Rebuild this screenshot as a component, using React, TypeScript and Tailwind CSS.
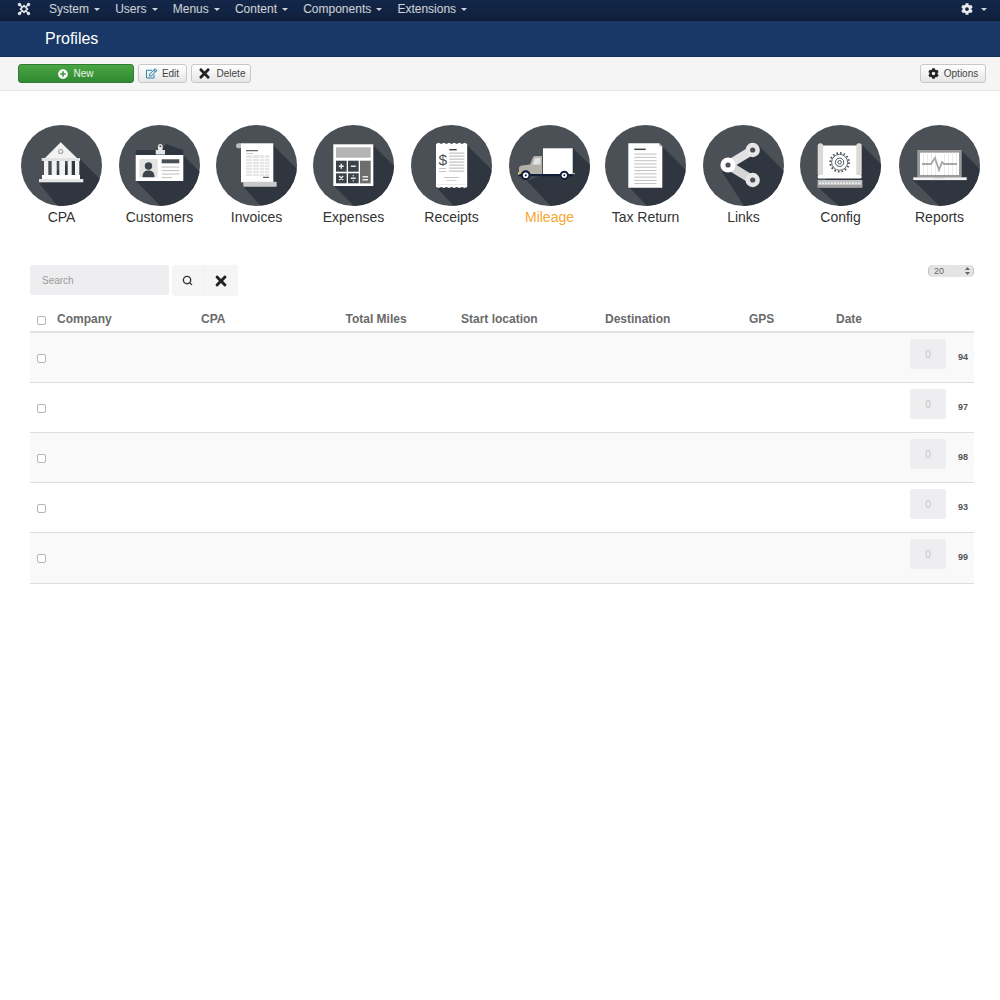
import type { ReactNode } from "react";
import { FaCog, FaPlusCircle, FaRegEdit, FaTimes } from "react-icons/fa";
import { Search } from "lucide-react";

const menu = ["System", "Users", "Menus", "Content", "Components", "Extensions"];
const columns = ["Company", "CPA", "Total Miles", "Start location", "Destination", "GPS", "Date"];
const rows = [94, 97, 98, 93, 99];

function Caret() {
  return <span className="ml-[5px] inline-block h-0 w-0 border-x-[3.5px] border-t-[3.5px] border-x-transparent border-t-white/80 align-middle" />;
}

function Joomla() {
  return (
    <svg width="14" height="14" viewBox="0 0 14 14" fill="none" stroke="#dfe3ea" strokeWidth="1.6">
      <path d="M2.5 2.5 L5 5 M11.5 2.5 L9 5 M2.5 11.5 L5 9 M11.5 11.5 L9 9 M7 3.6 L10.4 7 L7 10.4 L3.6 7 Z" />
      <circle cx="2.5" cy="2.5" r="1.7" fill="#dfe3ea" stroke="none" />
      <circle cx="11.5" cy="2.5" r="1.7" fill="#dfe3ea" stroke="none" />
      <circle cx="2.5" cy="11.5" r="1.7" fill="#dfe3ea" stroke="none" />
      <circle cx="11.5" cy="11.5" r="1.7" fill="#dfe3ea" stroke="none" />
    </svg>
  );
}

function Circle({ shadow, children }: { shadow: string; children: ReactNode }) {
  return (
    <div className="h-[81px] w-[81px] overflow-hidden rounded-full bg-[#4a5056]">
      <svg width="81" height="81" viewBox="0 0 81 81">
        <polygon points={shadow} fill="#30363f" />
        {children}
      </svg>
    </div>
  );
}

function lines(x: number, w: number, ys: number[], color = "#c9c9c9", h = 1) {
  return ys.map((y) => <rect key={`${x}-${y}`} x={x} y={y} width={w} height={h} fill={color} />);
}

const IconCpa = (
  <Circle shadow="57,32 110,85 60,110 18,58">
    <polygon points="39.7,17.3 56,33 24,33" fill="#f2f2f2" />
    <circle cx="39.7" cy="26.5" r="2.6" fill="#a5a5a5" />
    <circle cx="39.7" cy="26.5" r="1.4" fill="#f2f2f2" />
    <rect x="20.7" y="33" width="38.3" height="3" fill="#e2e2e2" />
    <rect x="23" y="36" width="4.3" height="14" fill="#f2f2f2" />
    <rect x="30.7" y="36" width="5" height="14" fill="#f2f2f2" />
    <rect x="38.3" y="36" width="5.7" height="14" fill="#f2f2f2" />
    <rect x="46.7" y="36" width="4" height="14" fill="#f2f2f2" />
    <rect x="54" y="36" width="4.3" height="14" fill="#f2f2f2" />
    <rect x="21" y="50" width="38" height="4" fill="#fff" />
    <rect x="18" y="54" width="44.3" height="3.3" fill="#e6e6e6" />
  </Circle>
);

const IconCustomers = (
  <Circle shadow="47,19 64,25 64,30 110,76 70,110 17,56">
    <rect x="16.7" y="25" width="47.6" height="5" fill="#30363f" />
    <rect x="16.7" y="30" width="47.6" height="26" fill="#fff" />
    <rect x="36.7" y="25" width="9.3" height="4.5" fill="#e4e4e4" />
    <rect x="39" y="19" width="4.6" height="7" rx="2.3" fill="#ececec" />
    <circle cx="41.3" cy="21.3" r="1" fill="#4a5056" />
    <rect x="20.3" y="34" width="18.4" height="18.3" fill="#e3e3e3" />
    <circle cx="29.5" cy="41" r="3.7" fill="#3d444b" />
    <path d="M23.5 52.3 C23.5 47 26 45.5 29.5 45.5 C33 45.5 35.5 47 35.5 52.3 Z" fill="#3d444b" />
    <rect x="42.7" y="34.3" width="17.6" height="4" fill="#4a5056" />
    {lines(42.7, 17.6, [41.5, 45, 48.5], "#c4c4c4", 1.1)}
    {lines(42.7, 10, [52], "#c4c4c4", 1.1)}
  </Circle>
);

const IconInvoices = (
  <Circle shadow="57,20 110,73 70,110 27,61">
    <rect x="20" y="18.3" width="7" height="5" rx="2.5" fill="#bdbdbd" />
    <rect x="25" y="18.3" width="32.3" height="39" fill="#fff" />
    <rect x="27.3" y="56.7" width="33.4" height="5" rx="1" fill="#c9c9c9" />
    <rect x="30" y="25.2" width="12" height="1" fill="#3d444b" />
    <rect x="30" y="28" width="7" height="0.8" fill="#bbb" />
    <rect x="30" y="30" width="23.3" height="21" fill="#e6e6e6" />
    {[33, 36, 39, 42, 45, 48].map((y) => (
      <rect key={y} x="30" y={y} width="23.3" height="0.8" fill="#fff" />
    ))}
    {[36, 43, 48].map((x) => (
      <rect key={x} x={x} y="30" width="0.8" height="21" fill="#fff" />
    ))}
    <rect x="47" y="51.8" width="6" height="1" fill="#3d444b" />
  </Circle>
);

const key = "#3c434a";
const IconExpenses = (
  <Circle shadow="60,20 110,70 70,110 21,61">
    <rect x="20.3" y="19.3" width="40" height="41.7" fill="#fff" />
    <rect x="23" y="22.3" width="34.7" height="10.4" fill="#b5b5b5" />
    <rect x="23" y="35.7" width="10.7" height="11" fill={key} />
    <rect x="35" y="35.7" width="10.7" height="11" fill={key} />
    <rect x="23" y="48.3" width="10.7" height="10" fill={key} />
    <rect x="35" y="48.3" width="10.7" height="10" fill={key} />
    <rect x="47" y="35.7" width="10.7" height="22.7" fill="#6e6e6e" />
    <path d="M25.8 41.2h5M28.3 38.7v5M37.8 41.2h5M26.2 51l4 4M30.2 51l-4 4M37.8 53.3h5M49.5 51.8h5.5M49.5 54.8h5.5" stroke="#e8e8e8" strokeWidth="1.5" />
    <circle cx="40.3" cy="50.8" r="0.8" fill="#e8e8e8" />
    <circle cx="40.3" cy="55.8" r="0.8" fill="#e8e8e8" />
  </Circle>
);

const IconReceipts = (
  <Circle shadow="56,20 110,74 70,110 25,62">
    <path d="M25 19 l2.6 -1.2 2.6 1.2 2.6 -1.2 2.6 1.2 2.6 -1.2 2.6 1.2 2.6 -1.2 2.6 1.2 2.6 -1.2 2.6 1.2 2.6 -1.2 2.6 1.2 V62 l-2.6 1 -2.6 -1 -2.6 1 -2.6 -1 -2.6 1 -2.6 -1 -2.6 1 -2.6 -1 -2.6 1 -2.6 -1 -2.6 1 -2.6 -1 Z" fill="#fff" />
    <text x="27.5" y="39.5" fontFamily="'Liberation Sans', sans-serif" fontSize="15.5" fill="#4a5056">$</text>
    <rect x="38.3" y="24" width="7.4" height="1.4" fill="#3c434a" />
    {lines(38.3, 15, [27.5, 30.5, 33.5, 36.5, 39.5, 42.5, 45.5], "#c6c6c6", 1.3)}
    {lines(28, 7, [43, 46], "#c6c6c6", 1)}
    {lines(33, 15, [52], "#c6c6c6", 1)}
    {lines(35.5, 10, [55], "#d0d0d0", 1)}
    {lines(26, 29, [59], "#dcdcdc", 0.6)}
  </Circle>
);

const IconMileage = (
  <Circle shadow="64,23 110,69 100,100 60,100 18,56 34,49">
    <rect x="34" y="23.3" width="29.7" height="25.7" fill="#fff" />
    <path d="M10 49 V43 Q10 41 13 40.5 L21 39.5 L24 32 Q24.5 31 26 31 H33 V49 Z" fill="#b3afa9" />
    <path d="M23.5 39.5 L26 33 H31.5 V39.5 Z" fill="#dfe3e6" />
    <rect x="9" y="49" width="55" height="2.2" fill="#12203b" />
    <rect x="63" y="48" width="3" height="1.2" fill="#b3afa9" />
    <rect x="9" y="47" width="1.4" height="3" fill="#e0c24a" />
    <circle cx="16.7" cy="50.3" r="5" fill="#12203b" />
    <circle cx="16.7" cy="50.3" r="2.8" fill="#fff" />
    <circle cx="16.7" cy="50.3" r="1.1" fill="#12203b" />
    <circle cx="55.3" cy="50.3" r="4.6" fill="#12203b" />
    <circle cx="55.3" cy="50.3" r="2.6" fill="#fff" />
    <circle cx="55.3" cy="50.3" r="1" fill="#12203b" />
  </Circle>
);

const IconTax = (
  <Circle shadow="56,20 110,74 70,110 24,62">
    <path d="M23.3 18.3 H54 L57.3 21.6 V62.7 H23.3 Z" fill="#fff" />
    <path d="M54 18.3 V21.6 H57.3 Z" fill="#c9c9c9" />
    <rect x="29.3" y="23.6" width="11.4" height="1.5" fill="#3c434a" />
    {lines(29.3, 22.3, [28.5, 31.8, 35.1, 38.4, 41.7, 45, 48.3, 51.6, 54.9, 58], "#c6c6c6", 1.1)}
  </Circle>
);

const IconLinks = (
  <Circle shadow="55,20 110,75 60,110 19,47">
    <path d="M25 40 L49.7 25" stroke="#e2e2e2" strokeWidth="9" />
    <path d="M25 40 L49.7 55" stroke="#d6d6d6" strokeWidth="9" />
    <circle cx="25" cy="40" r="7.6" fill="#fff" />
    <circle cx="49.7" cy="25" r="7.2" fill="#e6e6e6" />
    <circle cx="49.7" cy="55" r="7.2" fill="#e6e6e6" />
    <circle cx="25" cy="40" r="2.6" fill="#4a5056" />
    <circle cx="49.7" cy="25" r="2.6" fill="#4a5056" />
    <circle cx="49.7" cy="55" r="2.6" fill="#4a5056" />
  </Circle>
);

const IconConfig = (
  <Circle shadow="62,20 110,68 70,110 18,62">
    <rect x="22" y="20.5" width="36" height="32" fill="#fff" />
    <rect x="17.7" y="18.3" width="5.4" height="33" rx="2.6" fill="#dcdad6" />
    <rect x="56.3" y="18.3" width="5.4" height="33" rx="2.6" fill="#dcdad6" />
    <rect x="17.7" y="50" width="44" height="3.5" rx="1.5" fill="#fff" />
    <circle cx="39.6" cy="37.3" r="8" fill="none" stroke="#4a5056" strokeWidth="0.9" />
    <circle cx="39.6" cy="37.3" r="9.4" fill="none" stroke="#4a5056" strokeWidth="1.8" strokeDasharray="1.6 2.1" />
    <circle cx="39.6" cy="37.3" r="4.2" fill="none" stroke="#4a5056" strokeWidth="1" />
    <circle cx="39.6" cy="37.3" r="1.8" fill="none" stroke="#4a5056" strokeWidth="1" />
    <rect x="17.7" y="55" width="44.6" height="7.5" fill="#c4c4c4" />
    <path d="M19 58.2 H61" stroke="#fff" strokeWidth="1" strokeDasharray="2 1" />
    <rect x="17.7" y="60" width="44.6" height="2.5" fill="#9e9e9e" />
  </Circle>
);

const IconReports = (
  <Circle shadow="62,25 110,73 70,110 14,55">
    <rect x="18.3" y="25" width="44.4" height="27.5" fill="#9a9a9a" />
    <rect x="21" y="27.7" width="39" height="22.3" fill="#fff" />
    {[24, 28, 32, 36, 45, 49, 53, 57].map((x) => (
      <rect key={x} x={x} y="27.7" width="1" height="22.3" fill="#ececec" />
    ))}
    <path d="M23 39 H32 L36 33 L40 45 L43 37 L45 39 H58" fill="none" stroke="#a8a8a8" strokeWidth="1.8" />
    <rect x="14.3" y="52.3" width="53.4" height="2.8" fill="#f3f3f3" />
    <rect x="35" y="52.3" width="11" height="1" fill="#c0c0c0" />
  </Circle>
);

const tiles: { label: string; icon: ReactNode; gap: string; active?: boolean }[] = [
  { label: "CPA", icon: IconCpa, gap: "ml-0" },
  { label: "Customers", icon: IconCustomers, gap: "ml-[17px]" },
  { label: "Invoices", icon: IconInvoices, gap: "ml-[16px]" },
  { label: "Expenses", icon: IconExpenses, gap: "ml-[16px]" },
  { label: "Receipts", icon: IconReceipts, gap: "ml-[17px]" },
  { label: "Mileage", icon: IconMileage, gap: "ml-[17px]", active: true },
  { label: "Tax Return", icon: IconTax, gap: "ml-[15px]" },
  { label: "Links", icon: IconLinks, gap: "ml-[17px]" },
  { label: "Config", icon: IconConfig, gap: "ml-[16px]" },
  { label: "Reports", icon: IconReports, gap: "ml-[18px]" },
];

function ToolButton({ children, className }: { children: ReactNode; className?: string }) {
  return (
    <button className={`flex h-[19px] items-center justify-center gap-[5px] rounded-[3px] border border-[#c8c8c8] bg-linear-to-b from-white to-[#e6e6e6] text-[10px] text-[#444] ${className ?? ""}`}>
      {children}
    </button>
  );
}

const box = "h-[9px] w-[9px] appearance-none rounded-[2px] border border-[#b5b5b5] bg-white";

export default function App() {
  return (
    <div className="min-h-[1000px] bg-white font-['Liberation_Sans',Arial,sans-serif]">
      <div className="flex h-[21px] items-center justify-between border-b border-[#0c1a30] bg-linear-to-b from-[#13274a] to-[#10203c] pr-[13px] pb-[2px] pl-[17px] text-white/80">
        <div className="flex items-center">
          <Joomla />
          <div className="ml-[18px] flex gap-[15.2px] text-[12px]">
            {menu.map((m) => (
              <span key={m} className="flex items-center">
                {m}
                <Caret />
              </span>
            ))}
          </div>
        </div>
        <div className="flex items-center">
          <FaCog className="h-[12px] w-[12px] text-white/90" />
          <span className="ml-[3px] flex">
            <Caret />
          </span>
        </div>
      </div>

      <div className="flex h-[35px] items-center bg-[#1a3867] pt-[1px] pl-[45px] text-[16px] text-white">Profiles</div>

      <div className="flex h-[35px] items-center justify-between border-t border-b border-t-[#16305a] border-b-[#e6e6e6] bg-[#f5f5f5] pr-[14px] pl-[18px]">
        <div className="flex items-center gap-[4px]">
          <button className="flex h-[19px] w-[116px] items-center justify-center gap-[5px] rounded-[3px] border border-[#2f7d32] bg-linear-to-b from-[#4aa544] to-[#2f8a30] text-[10px] text-white/90">
            <FaPlusCircle className="h-[10px] w-[10px] text-white" />
            New
          </button>
          <ToolButton className="w-[49px]">
            <FaRegEdit className="h-[11px] w-[11px] text-[#2a7fa8]" />
            Edit
          </ToolButton>
          <ToolButton className="w-[60px]">
            <FaTimes className="h-[15px] w-[15px] text-[#222]" />
            Delete
          </ToolButton>
        </div>
        <ToolButton className="w-[66px]">
          <FaCog className="h-[11px] w-[11px] text-[#222]" />
          Options
        </ToolButton>
      </div>

      <div className="flex pt-[34px] pl-[21px]">
        {tiles.map((t) => (
          <div key={t.label} className={`flex w-[81px] flex-col items-center ${t.gap}`}>
            {t.icon}
            <span className={`mt-[3px] whitespace-nowrap text-[14px] leading-[16px] ${t.active ? "text-[#f9a631]" : "text-[#333]"}`}>{t.label}</span>
          </div>
        ))}
      </div>

      <div className="mt-[40px] mr-[26px] ml-[30px]">
        <div className="flex items-start justify-between">
          <div className="flex gap-[3px]">
            <div className="flex h-[30px] w-[139px] items-center rounded-[2px] bg-[#eeeef0] pl-[12px] text-[10px] text-[#999]">Search</div>
            <div className="flex h-[31px] w-[66px] rounded-[3px] bg-[#f5f5f5] text-[#333]">
              <div className="flex w-[32px] items-center justify-center border-r border-[#f0f0f0]">
                <Search className="h-[11px] w-[11px]" strokeWidth={3} />
              </div>
              <div className="flex flex-1 items-center justify-center">
                <FaTimes className="h-[16px] w-[16px] text-[#222]" />
              </div>
            </div>
          </div>
          <div className="flex h-[12px] w-[46px] items-center justify-between rounded-[5px] border-x border-[#bdbdbd] bg-[#e4e4e4] pr-[3px] pl-[5px] text-[9px] leading-none text-[#666]">
            20
            <svg width="5" height="8" viewBox="0 0 5 8" fill="#666">
              <path d="M2.5 0 L5 3 H0 Z M2.5 8 L0 5 H5 Z" />
            </svg>
          </div>
        </div>

        <div className="mt-[14px] flex h-[23px] items-center border-b-2 border-[#e0e0e0] pt-[1px] pb-[4px] text-[12px] font-bold text-[#6a6a6a]">
          <div className="flex w-[27px] justify-center pt-[2px] pr-[5px]">
            <input type="checkbox" className={box} />
          </div>
          <div className="grid flex-1 grid-cols-[144px_144.5px_115.5px_144px_144px_87px_1fr]">
            {columns.map((c) => (
              <span key={c}>{c}</span>
            ))}
          </div>
        </div>

        {rows.map((id, i) => (
          <div key={id} className={`flex items-start justify-between border-b border-[#dedede] ${i === rows.length - 1 ? "h-[51px]" : "h-[50px]"} ${i % 2 === 0 ? "bg-[#f9f9f9]" : "bg-white"}`}>
            <div className="flex w-[22px] justify-center pt-[21px]">
              <input type="checkbox" className={box} />
            </div>
            <div className="flex items-start pt-[6px]">
              <div className="flex h-[30px] w-[36px] items-center justify-center rounded-[2px] bg-[#eeeef0] text-[10px] text-[#c4c4c4]">0</div>
              <span className="w-[28px] pt-[12px] pl-[12px] text-[9px] leading-[12px] font-bold text-[#555]">{id}</span>
            </div>
          </div>
        ))}
      </div>
    </div>
  );
}
